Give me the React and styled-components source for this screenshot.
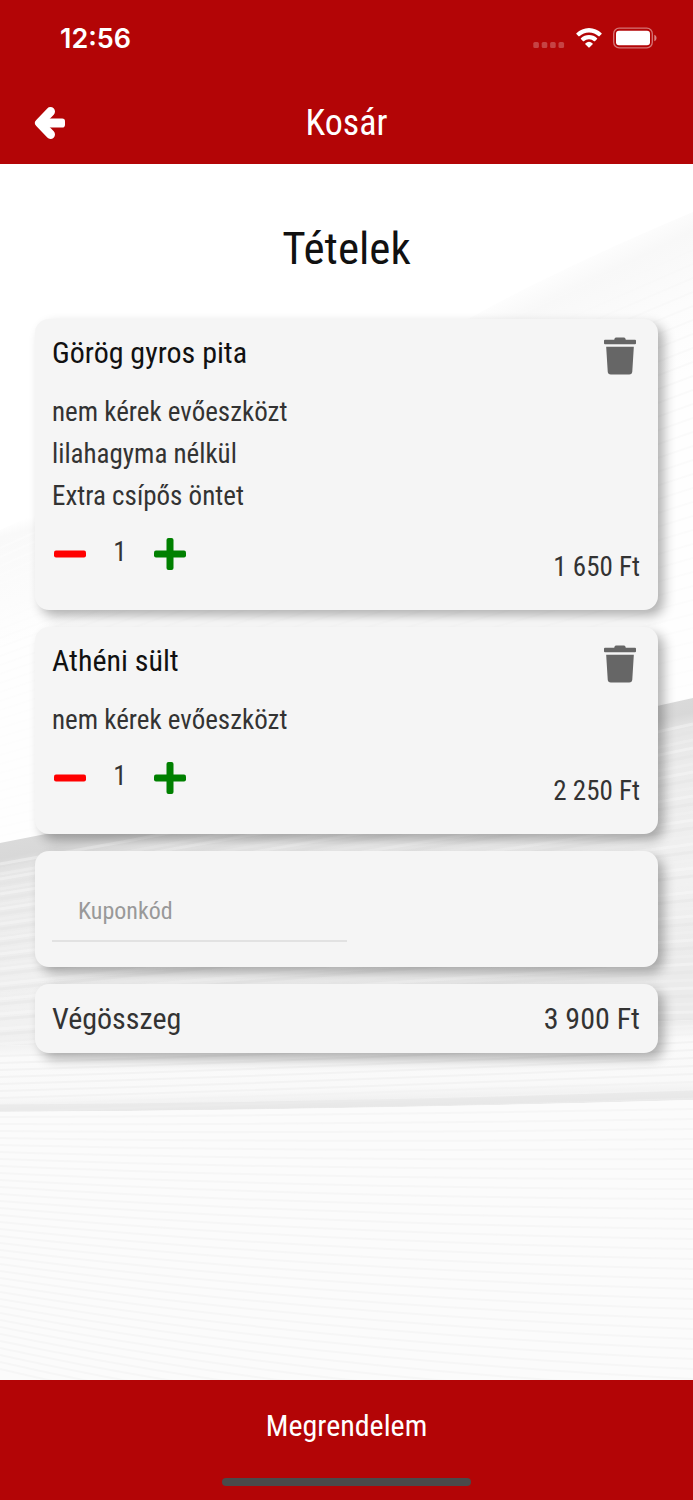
import React, { useState } from "react";
import styled, { createGlobalStyle } from "styled-components";

const GlobalStyle = createGlobalStyle`
  *, *::before, *::after { box-sizing: border-box; }
  body {
    margin: 0;
    background: #fff;
    color: #333;
    font-family: "Roboto Condensed", "Liberation Sans Narrow", Roboto, sans-serif;
  }
  h1, h2, h3, p, ul { margin: 0; padding: 0; font-weight: 400; }
  ul { list-style: none; }
  button, input { font: inherit; color: inherit; }
`;

const Screen = styled.div`
  display: flex;
  flex-direction: column;
  min-height: 100vh;
`;

const TopBar = styled.header`
  background: #b30506;
  color: #fff;
`;

const StatusBar = styled.div`
  display: flex;
  align-items: center;
  justify-content: space-between;
  height: 76px;
  padding: 0 36px 0 60px;
`;

const Clock = styled.time`
  padding-top: 2px;
  font-family: Inter, sans-serif;
  font-size: 27px;
  line-height: 32px;
  font-weight: 600;
`;

const StatusIcons = styled.div`
  display: flex;
  align-items: center;
  gap: 10px;
`;

const NavBar = styled.div`
  display: grid;
  grid-template-columns: 1fr auto 1fr;
  align-items: center;
  height: 88px;
  padding: 5px 32px 0;
`;

const NavTitle = styled.h1`
  font-size: 36px;
  line-height: 44px;
`;

const IconButton = styled.button`
  display: inline-flex;
  justify-content: center;
  align-items: center;
  width: ${(p) => p.$width || 36}px;
  height: ${(p) => p.$height || 36}px;
  padding: 0;
  border: 0;
  background: none;
  color: ${(p) => p.$color || "inherit"};
  cursor: pointer;
`;

const Content = styled.main`
  position: relative;
  flex: 1;
  padding: 57px 35px;
  isolation: isolate;
`;

const Backdrop = styled.svg`
  position: absolute;
  inset: 0;
  z-index: -1;
  width: 100%;
  height: 100%;
`;

const SectionTitle = styled.h2`
  margin-bottom: 42px;
  color: #111;
  font-size: 45px;
  line-height: 56px;
  text-align: center;
`;

const Stack = styled.div`
  display: flex;
  flex-direction: column;
  gap: 17px;
`;

const Card = styled.section`
  padding: ${(p) => p.$padding};
  border-radius: 14px;
  background: #f5f5f5;
  box-shadow: 6px 6px 12px rgba(0, 0, 0, 0.3);
`;

const CardHead = styled.div`
  display: flex;
  justify-content: space-between;
  align-items: flex-start;
  height: 56px;
`;

const ItemName = styled.h3`
  color: #111;
  font-size: 30px;
  line-height: 36px;
`;

const Option = styled.li`
  font-size: 27px;
  line-height: 42px;
`;

const CardFoot = styled.div`
  display: flex;
  justify-content: space-between;
  align-items: flex-start;
  padding-top: 19px;
`;

const Stepper = styled.div`
  display: flex;
  align-items: flex-start;
  gap: 24px;
`;

const Quantity = styled.output`
  width: 16px;
  font-size: 27px;
  line-height: 32px;
  text-align: center;
`;

const Price = styled.p`
  padding-top: 15px;
  font-size: 27px;
  line-height: 32px;
`;

const CouponInput = styled.input`
  display: block;
  width: 50%;
  height: 60px;
  padding: 0 26px;
  border: 0;
  border-bottom: 2px solid #e2e2e2;
  border-radius: 0;
  outline: none;
  background: none;
  font-size: 24px;
  &::placeholder { color: #999; opacity: 1; }
`;

const TotalRow = styled.div`
  display: flex;
  justify-content: space-between;
  font-size: 30px;
  line-height: 36px;
`;

const BottomBar = styled.footer`
  display: flex;
  flex-direction: column;
  align-items: center;
  height: 120px;
  background: #b30506;
  color: #fff;
`;

const OrderButton = styled.button`
  width: 100%;
  height: 90px;
  padding: 2px 0 0;
  border: 0;
  background: none;
  font-size: 30px;
  line-height: 36px;
  cursor: pointer;
`;

const HomeIndicator = styled.div`
  width: 36%;
  height: 8px;
  margin-top: 8px;
  border-radius: 4px;
  background: #4a4a4a;
`;

const range = (n) => Array.from({ length: n }, (_, i) => i);

function PaperBackdrop() {
  return (
    <Backdrop viewBox="0 164 693 1216" preserveAspectRatio="none" aria-hidden="true">
      <defs>
        <linearGradient id="upper" gradientUnits="userSpaceOnUse" x1="560" y1="262" x2="630" y2="402">
          <stop offset="0" stopColor="#fff" />
          <stop offset="0.2" stopColor="#f8f8f8" />
          <stop offset="0.6" stopColor="#fcfcfc" />
          <stop offset="1" stopColor="#fefefe" />
        </linearGradient>
        <linearGradient id="left" gradientUnits="userSpaceOnUse" x1="0" y1="525" x2="30" y2="640">
          <stop offset="0" stopColor="#fff" />
          <stop offset="0.1" stopColor="#f9f9f9" />
          <stop offset="1" stopColor="#fefefe" />
        </linearGradient>
        <linearGradient id="fade" gradientUnits="userSpaceOnUse" x1="0" y1="220" x2="0" y2="720">
          <stop offset="0" stopColor="#f8f8f8" />
          <stop offset="1" stopColor="#fdfdfd" />
        </linearGradient>
        <linearGradient id="middle" gradientUnits="userSpaceOnUse" x1="346" y1="770" x2="399" y2="1020">
          <stop offset="0" stopColor="#dadada" />
          <stop offset="0.06" stopColor="#d8d8d8" />
          <stop offset="0.12" stopColor="#e6e6e6" />
          <stop offset="0.25" stopColor="#ebebeb" />
          <stop offset="0.7" stopColor="#f1f1f1" />
          <stop offset="1" stopColor="#ebebeb" />
        </linearGradient>
        <linearGradient id="lower" gradientUnits="userSpaceOnUse" x1="346" y1="1030" x2="348" y2="1108">
          <stop offset="0" stopColor="#ededed" />
          <stop offset="0.25" stopColor="#fafafa" />
          <stop offset="0.75" stopColor="#f9f9f9" />
          <stop offset="1" stopColor="#ebebeb" />
        </linearGradient>
        <clipPath id="upperClip">
          <path d="M693 212Q560 268 470 318L0 530V850L693 700Z" />
        </clipPath>
        <clipPath id="middleClip">
          <path d="M0 843Q346 776 693 698V1020Q346 1036 0 1046Z" />
        </clipPath>
        <clipPath id="lowerClip">
          <path d="M0 1046Q346 1036 693 1020V1100Q346 1110 0 1112Z" />
        </clipPath>
        <clipPath id="baseClip">
          <path d="M0 1112Q346 1110 693 1100V1380H0Z" />
        </clipPath>
      </defs>
      <path d="M0 164H693V1380H0Z" fill="#fff" />
      <g clipPath="url(#upperClip)">
        <path d="M300 164H693V720H300Z" fill="url(#upper)" />
        <path d="M0 480H300V860H0Z" fill="url(#left)" />
        <g fill="none" stroke="url(#fade)" strokeWidth="2">
          {range(34).map((i) => (
            <path key={i} d={`M0 ${548 + i * 9}L693 ${236 + i * 14}`} />
          ))}
        </g>
      </g>
      <g clipPath="url(#middleClip)">
        <path d="M0 690H693V1060H0Z" fill="url(#middle)" />
        <g fill="none" strokeWidth="3">
          {range(38).map((i) => (
            <path
              key={i}
              stroke={i % 3 === 0 ? "#fafafa" : i % 3 === 1 ? "#e4e4e4" : "#f3f3f3"}
              strokeOpacity="0.4"
              d={`M0 ${864 + i * 5}Q346 ${803 + i * 6} 693 ${724 + i * 8}`}
            />
          ))}
        </g>
      </g>
      <g clipPath="url(#lowerClip)">
        <path d="M0 1010H693V1120H0Z" fill="url(#lower)" />
        <g fill="none" stroke="#f3f3f3" strokeWidth="2">
          {range(9).map((i) => (
            <path key={i} d={`M0 ${1056 + i * 7}Q346 ${1046 + i * 7} 693 ${1026 + i * 8}`} />
          ))}
        </g>
        <path d="M0 1108Q346 1106 693 1094" fill="none" stroke="#e4e4e4" strokeWidth="7" strokeOpacity="0.5" />
      </g>
      <g clipPath="url(#baseClip)">
        <path d="M0 1090H693V1380H0Z" fill="#fbfbfb" />
        <g fill="none" stroke="#f6f6f6" strokeWidth="2">
          {range(37).map((i) => (
            <path key={i} d={`M0 ${1117 + i * 7}Q300 ${1116 + i * 9} 693 ${1109 + i * 10}`} />
          ))}
        </g>
      </g>
    </Backdrop>
  );
}

function SignalDots() {
  return (
    <svg width="32" height="22" viewBox="0 0 32 22" fill="#fff" fillOpacity="0.25" aria-hidden="true">
      {range(4).map((i) => (
        <rect key={i} x={i * 8.4 + 0.3} y="15" width="5.6" height="6" rx="1.6" />
      ))}
    </svg>
  );
}

function WifiIcon() {
  return (
    <svg width="28" height="22" viewBox="0 0 28 22" fill="#fff" aria-hidden="true">
      <path d="M14 5.400c3.700 0 7 1.400 9.600 3.900.3.200.6.200.8 0l2.200-2.200c.2-.2.2-.6 0-.8A18.200 18.200 0 0 0 14 .9 18.200 18.200 0 0 0 1.400 6.300c-.2.2-.2.6 0 .8l2.200 2.200c.2.200.5.200.8 0C7 6.800 10.300 5.400 14 5.400z" />
      <path d="M14 12.200c2 0 3.700.7 5.100 2 .2.200.6.200.8 0l2.200-2.200c.2-.2.2-.6 0-.8a11.800 11.800 0 0 0-16.200 0c-.2.2-.2.600 0 .8l2.200 2.200c.2.200.6.200.8 0 1.400-1.300 3.100-2 5.100-2z" />
      <path d="M17.700 16.600c.2-.2.2-.600 0-.8a5.800 5.800 0 0 0-7.400 0c-.2.2-.2.600 0 .8l3.300 3.400c.2.200.6.200.8 0z" transform="translate(0 .6)" />
    </svg>
  );
}

function BatteryIcon() {
  return (
    <svg width="44" height="22" viewBox="0 0 44 22" fill="none" aria-hidden="true">
      <rect x="0.700" y="1.200" width="38.600" height="19.600" rx="5.500" stroke="#fff" strokeOpacity="0.45" strokeWidth="1.300" />
      <rect x="3" y="3.800" width="34" height="14.400" rx="3" fill="#fff" />
      <path d="M41.300 7.800c1.400.6 2.200 1.800 2.200 3.200s-.8 2.600-2.200 3.200z" fill="#fff" fillOpacity="0.5" />
    </svg>
  );
}

function BackIcon() {
  return (
    <svg width="32" height="34" viewBox="0 0 32 34" fill="none" stroke="#fff" strokeLinecap="round" strokeLinejoin="round" aria-hidden="true">
      <rect x="10" y="12.500" width="21" height="9" rx="2.800" fill="#fff" stroke="none" />
      <path d="M16.500 5.600L5.500 17L16.500 28.400" strokeWidth="9" />
      <path d="M12 12L7 17L12 22Z" fill="#fff" strokeWidth="3" />
    </svg>
  );
}

function TrashIcon() {
  return (
    <svg width="32" height="38" viewBox="0 0 32 38" fill="currentColor" aria-hidden="true">
      <path d="M1 2.800H10.200L10.600 1.600Q11 .4 12.200.4H19.800Q21 .4 21.400 1.600L21.800 2.800H31Q32 2.800 32 3.800V6.300Q32 7.300 31 7.300H1Q0 7.300 0 6.300V3.800Q0 2.800 1 2.800Z" />
      <path d="M2.200 9.800H29.800L28.300 34.500Q28.100 37.400 25.200 37.400H6.800Q3.900 37.400 3.700 34.500Z" />
    </svg>
  );
}

function MinusIcon() {
  return (
    <svg width="36" height="36" viewBox="0 0 36 36" fill="currentColor" aria-hidden="true">
      <rect x="2" y="14.500" width="32" height="7" rx="2" />
    </svg>
  );
}

function PlusIcon() {
  return (
    <svg width="36" height="36" viewBox="0 0 36 36" fill="currentColor" aria-hidden="true">
      <rect x="2" y="14.500" width="32" height="7" rx="2" />
      <rect x="14.500" y="2" width="7" height="32" rx="2" />
    </svg>
  );
}

const formatPrice = (value) => `${String(value).replace(/\B(?=(\d{3})+$)/g, " ")} Ft`;

function CartItem({ item, onChange, onRemove }) {
  return (
    <Card $padding="16px 18px 27px 17px">
      <CardHead>
        <ItemName>{item.name}</ItemName>
        <IconButton $width={40} $height={42} $color="#666" aria-label="Törlés" onClick={onRemove}>
          <TrashIcon />
        </IconButton>
      </CardHead>
      <ul>
        {item.options.map((option) => (
          <Option key={option}>{option}</Option>
        ))}
      </ul>
      <CardFoot>
        <Stepper>
          <IconButton $color="#f00" aria-label="Kevesebb" onClick={() => onChange(-1)}>
            <MinusIcon />
          </IconButton>
          <Quantity>{item.count}</Quantity>
          <IconButton $color="#008000" aria-label="Több" onClick={() => onChange(1)}>
            <PlusIcon />
          </IconButton>
        </Stepper>
        <Price>{formatPrice(item.price * item.count)}</Price>
      </CardFoot>
    </Card>
  );
}

const initialItems = [
  {
    id: 1,
    name: "Görög gyros pita",
    options: ["nem kérek evőeszközt", "lilahagyma nélkül", "Extra csípős öntet"],
    count: 1,
    price: 1650,
  },
  { id: 2, name: "Athéni sült", options: ["nem kérek evőeszközt"], count: 1, price: 2250 },
];

export default function App() {
  const [items, setItems] = useState(initialItems);
  const total = items.reduce((sum, item) => sum + item.price * item.count, 0);

  const changeCount = (id, step) =>
    setItems((list) =>
      list.map((item) => (item.id === id ? { ...item, count: Math.max(1, item.count + step) } : item))
    );
  const removeItem = (id) => setItems((list) => list.filter((item) => item.id !== id));

  return (
    <Screen>
      <GlobalStyle />
      <TopBar>
        <StatusBar>
          <Clock>12:56</Clock>
          <StatusIcons>
            <SignalDots />
            <WifiIcon />
            <BatteryIcon />
          </StatusIcons>
        </StatusBar>
        <NavBar>
          <IconButton aria-label="Vissza">
            <BackIcon />
          </IconButton>
          <NavTitle>Kosár</NavTitle>
        </NavBar>
      </TopBar>
      <Content>
        <PaperBackdrop />
        <SectionTitle>Tételek</SectionTitle>
        <Stack>
          {items.map((item) => (
            <CartItem
              key={item.id}
              item={item}
              onChange={(step) => changeCount(item.id, step)}
              onRemove={() => removeItem(item.id)}
            />
          ))}
          <Card $padding="31px 17px 25px">
            <CouponInput type="text" placeholder="Kuponkód" aria-label="Kuponkód" />
          </Card>
          <Card $padding="17px 18px 16px 17px">
            <TotalRow>
              <span>Végösszeg</span>
              <span>{formatPrice(total)}</span>
            </TotalRow>
          </Card>
        </Stack>
      </Content>
      <BottomBar>
        <OrderButton>Megrendelem</OrderButton>
        <HomeIndicator />
      </BottomBar>
    </Screen>
  );
}
